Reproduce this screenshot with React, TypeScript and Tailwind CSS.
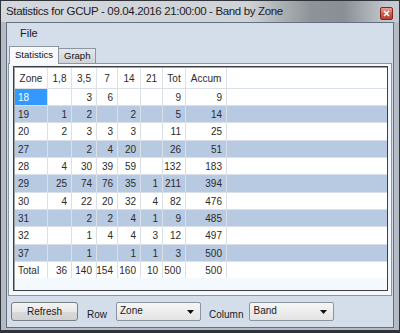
import React from "react";

type Row = { zone: string; vals: (number | null)[]; blue: boolean };

const rows: Row[] = [
  { zone: "18", vals: [null, 3, 6, null, null, 9, 9], blue: false },
  { zone: "19", vals: [1, 2, null, 2, null, 5, 14], blue: true },
  { zone: "20", vals: [2, 3, 3, 3, null, 11, 25], blue: false },
  { zone: "27", vals: [null, 2, 4, 20, null, 26, 51], blue: true },
  { zone: "28", vals: [4, 30, 39, 59, null, 132, 183], blue: false },
  { zone: "29", vals: [25, 74, 76, 35, 1, 211, 394], blue: true },
  { zone: "30", vals: [4, 22, 20, 32, 4, 82, 476], blue: false },
  { zone: "31", vals: [null, 2, 2, 4, 1, 9, 485], blue: true },
  { zone: "32", vals: [null, 1, 4, 4, 3, 12, 497], blue: false },
  { zone: "37", vals: [null, 1, null, 1, 1, 3, 500], blue: true },
  { zone: "Total", vals: [36, 140, 154, 160, 10, 500, 500], blue: false },
];

const headers = ["Zone", "1,8", "3,5", "7", "14", "21", "Tot", "Accum"];
const widths = ["w-[33px]", "w-[24px]", "w-[25px]", "w-[21px]", "w-[23px]", "w-[22px]", "w-[23px]", "w-[41px]"];

function Combo({ label }: { label: string }) {
  return (
    <div className="w-[85px] h-[19px] rounded-[2px] border border-[#8d949c] bg-[linear-gradient(to_bottom,#f6f6f6,#e4e4e4)] flex items-center pl-[3px] pr-[6px] text-[10px] text-[#1a1a1a]">
      <span className="-mt-[2px]">{label}</span>
      <svg className="ml-auto" width="7" height="4" viewBox="0 0 7 4">
        <path d="M0 0 L7 0 L3.5 4 Z" fill="#111" />
      </svg>
    </div>
  );
}

export default function App() {
  return (
    <div className="w-[400px] h-[333px] bg-[#2f343a] pt-[1px] px-[1px] pb-[3px] font-['Liberation_Sans',Arial,sans-serif]">
      <div className="h-full flex flex-col bg-[#b4bbc4]">
        {/* title bar */}
        <div className="h-[21px] shrink-0 flex items-center pl-[5px] pr-[6px] bg-[linear-gradient(to_right,#d4d8dd_0%,#cfd3d8_62%,#8e9399_78%,#8a8f95_86%,#bfc4ca_96%,#c7ccd2_100%)]">
          <span className="text-[11.5px] text-[#1c1c1c] tracking-[-0.35px] mt-[1px]">
            Statistics for GCUP - 09.04.2016 21:00:00 - Band by Zone
          </span>
          <div className="ml-auto mt-[3px] w-[13px] h-[13px] rounded-[2px] border border-[#7a2a22] bg-[linear-gradient(to_bottom,#e8a195,#cc5a48_55%,#b8402f)] flex items-center justify-center">
            <svg width="7" height="7" viewBox="0 0 7 7">
              <path d="M1 1 L6 6 M6 1 L1 6" stroke="#fff" strokeWidth="1.6" />
            </svg>
          </div>
        </div>
        {/* client */}
        <div className="flex-1 flex px-[5px] pb-[2px] pt-[0px]">
          <div className="flex-1 border border-[#65707e] bg-[#d4deeb] flex flex-col">
            {/* menu */}
            <div className="h-[21px] shrink-0 flex items-center pl-[13px] text-[11px] text-[#1a1a1a]">
              <span>File</span>
            </div>
            {/* tabs */}
            <div className="h-[19px] shrink-0 flex items-end pl-[2px]">
              <div className="h-[18px] px-[5px] bg-[#f7f9fb] border border-b-0 border-[#8c96a2] flex items-center text-[9.5px] text-[#111] relative top-[1px] z-10">
                Statistics
              </div>
              <div className="h-[15px] px-[5px] bg-[linear-gradient(to_bottom,#e4e7ea,#cfd4d9)] border border-b-0 border-l-0 border-[#8c96a2] flex items-center text-[9.5px] text-[#111]">
                Graph
              </div>
            </div>
            {/* panel */}
            <div className="h-[233px] shrink-0 mx-[1px] border border-[#8c96a2] bg-[#f4f8fc] pl-[4px] pr-[3px] pt-[2px] pb-[4px] flex">
              <div className="flex-1 border border-[#3d3f42] shadow-[inset_1px_1px_0_#9aa0a6] bg-[#f3f9fd] pt-[1px] pl-[1px]">
                <div className="flex flex-col text-[10px] text-[#2b2b2b]">
                  <div className="flex h-[20px] bg-white">
                    {headers.map((h, i) => (
                      <div
                        key={h}
                        className={`${widths[i]} flex items-center justify-center border-r border-[#dde3ea]`}
                      >
                        {h}
                      </div>
                    ))}
                  </div>
                  {rows.map((r, ri) => (
                    <div
                      key={r.zone}
                      className={`flex ${ri % 3 === 2 ? "h-[18px]" : "h-[17px]"} ${r.blue ? "bg-[#b8cae2]" : "bg-white"} border-t border-[#d9e0e8]`}
                    >
                      <div
                        className={`${widths[0]} flex items-center pl-[3px] border-r border-[#d9e0e8] ${
                          ri === 0 ? "bg-[#3399ff] text-white" : ""
                        }`}
                      >
                        {r.zone}
                      </div>
                      {r.vals.map((v, vi) => (
                        <div
                          key={vi}
                          className={`${widths[vi + 1]} flex items-center justify-end pr-[4px] border-r border-[#d9e0e8]`}
                        >
                          {v === null ? "" : v}
                        </div>
                      ))}
                    </div>
                  ))}
                </div>
              </div>
            </div>
            {/* bottom bar */}
            <div className="flex-1 flex items-center pl-[4px] text-[10px] text-[#1a1a1a]">
              <div className="w-[67px] h-[19px] rounded-[3px] border border-[#7b7f84] bg-[linear-gradient(to_bottom,#f4f4f4,#e8e8e8_50%,#d9d9d9_51%,#d2d2d2)] flex items-center justify-center text-[10px]">
                Refresh
              </div>
              <span className="ml-[9px] mt-[5px]">Row</span>
              <div className="ml-[9px]">
                <Combo label="Zone" />
              </div>
              <span className="ml-[8px] mt-[5px]">Column</span>
              <div className="ml-[6px]">
                <Combo label="Band" />
              </div>
            </div>
          </div>
        </div>
      </div>
    </div>
  );
}
